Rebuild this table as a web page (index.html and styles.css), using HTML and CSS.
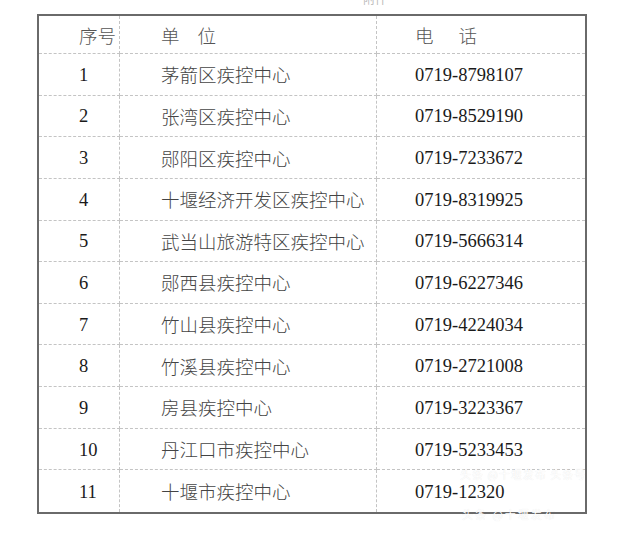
FILE: index.html
```html
<!DOCTYPE html>
<html lang="zh-CN">
<head>
<meta charset="utf-8">
<title>十堰市疾控中心电话</title>
<link rel="stylesheet" href="styles.css">
</head>
<body>
<div class="page">
  <div class="top-frag">附件</div>
  <div class="sheet">
    <div class="cell c1 head">序号</div>
    <div class="cell c2 head sp1">单位</div>
    <div class="cell c3 head sp2">电话</div>

    <div class="cell c1 num">1</div><div class="cell c2">茅箭区疾控中心</div><div class="cell c3 tel">0719-8798107</div>
    <div class="cell c1 num">2</div><div class="cell c2">张湾区疾控中心</div><div class="cell c3 tel">0719-8529190</div>
    <div class="cell c1 num">3</div><div class="cell c2">郧阳区疾控中心</div><div class="cell c3 tel">0719-7233672</div>
    <div class="cell c1 num">4</div><div class="cell c2">十堰经济开发区疾控中心</div><div class="cell c3 tel">0719-8319925</div>
    <div class="cell c1 num">5</div><div class="cell c2">武当山旅游特区疾控中心</div><div class="cell c3 tel">0719-5666314</div>
    <div class="cell c1 num">6</div><div class="cell c2">郧西县疾控中心</div><div class="cell c3 tel">0719-6227346</div>
    <div class="cell c1 num">7</div><div class="cell c2">竹山县疾控中心</div><div class="cell c3 tel">0719-4224034</div>
    <div class="cell c1 num">8</div><div class="cell c2">竹溪县疾控中心</div><div class="cell c3 tel">0719-2721008</div>
    <div class="cell c1 num">9</div><div class="cell c2">房县疾控中心</div><div class="cell c3 tel">0719-3223367</div>
    <div class="cell c1 num">10</div><div class="cell c2">丹江口市疾控中心</div><div class="cell c3 tel">0719-5233453</div>
    <div class="cell c1 num last">11</div><div class="cell c2 last">十堰市疾控中心</div><div class="cell c3 tel last">0719-12320</div>
  </div>
  <div class="wm wm1">头条 @十堰发布 头条号</div>
  <div class="wm wm2">头条 @十堰发布</div>
</div>
</body>
</html>
```
FILE: styles.css
```css
html, body {
  margin: 0;
  padding: 0;
  background: #fff;
}
.page {
  position: relative;
  width: 620px;
  height: 533px;
  overflow: hidden;
  padding-top: 14px;
  box-sizing: border-box;
}
.top-frag {
  position: absolute;
  left: 363px;
  top: -10px;
  font-family: "Noto Sans CJK SC", sans-serif;
  font-size: 12px;
  color: #bbb;
}
.sheet {
  margin-left: 37px;
  width: 550px;
  height: 500px;
  box-sizing: border-box;
  border: 2px solid #6a6a6a;
  display: grid;
  grid-template-columns: 81px 257px 1fr;
  grid-template-rows: 38px repeat(11, 1fr);
  font-family: "Liberation Serif", "Noto Sans CJK SC", serif;
  font-size: 18.5px;
  color: #3a3a3a;
}
.cell {
  display: flex;
  align-items: center;
  border-bottom: 1px dashed #c4c4c4;
  white-space: nowrap;
}
.cell.last {
  border-bottom: none;
}
.c1 {
  padding-left: 40px;
  border-right: 1px dashed #c4c4c4;
}
.c2 {
  padding-left: 41px;
  border-right: 1px dashed #c4c4c4;
  font-weight: 300;
  color: #444;
}
.c3 {
  padding-left: 38px;
}
.head {
  color: #555;
  font-weight: 300;
}
.sp1 {
  letter-spacing: 18px;
}
.sp2 {
  letter-spacing: 25px;
}
.num, .tel {
  color: #1a1a1a;
  padding-top: 2px;
}
.num {
  font-size: 18.5px;
}
.wm {
  position: absolute;
  font-family: "Noto Sans CJK SC", sans-serif;
  font-size: 11px;
  line-height: 12px;
  color: #fff;
  white-space: nowrap;
  text-shadow: 0 0 1px rgba(0,0,0,0.12);
}
.wm1 {
  left: 460px;
  top: 468px;
  letter-spacing: 1px;
}
.wm2 {
  left: 462px;
  top: 508px;
  letter-spacing: 2px;
}
```
